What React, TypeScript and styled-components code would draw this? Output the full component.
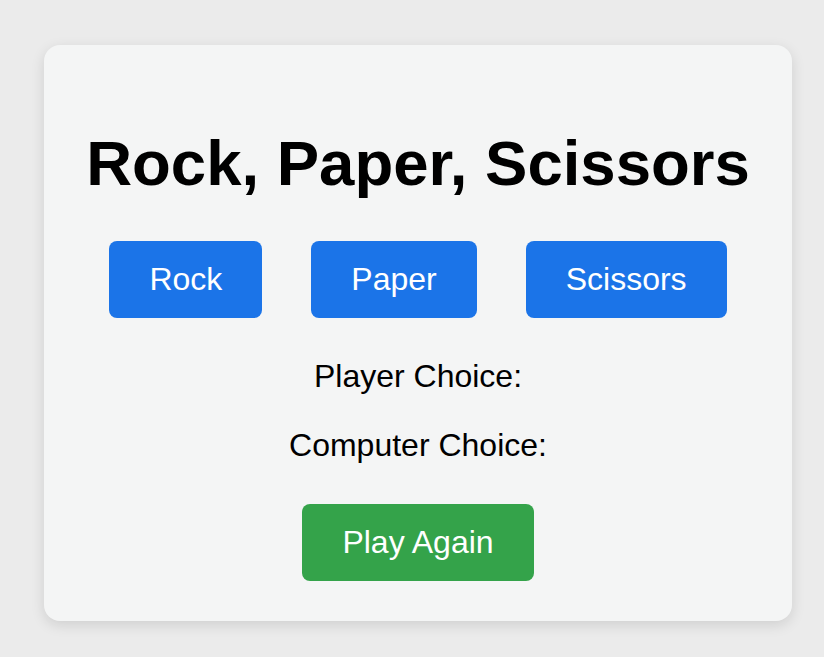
import React from "react";
import styled, { createGlobalStyle } from "styled-components";

const GlobalStyle = createGlobalStyle`
  html, body {
    margin: 0;
    padding: 0;
    background: #ebebeb;
    font-family: "Liberation Sans", Arial, Helvetica, sans-serif;
  }
`;

const Page = styled.div`
  display: flex;
  align-items: flex-start;
  padding: 45px 32px 37px 44px;
  min-height: 657px;
  box-sizing: border-box;
`;

const Card = styled.main`
  width: 748px;
  box-sizing: border-box;
  padding: 0 20px 40px;
  background: #f4f5f5;
  border-radius: 16px;
  box-shadow: 0 4px 14px rgba(0, 0, 0, 0.12);
  display: flex;
  flex-direction: column;
  align-items: center;
  color: #000;
`;

const Title = styled.h1`
  margin: 82px 0 40px;
  font-size: 63.5px;
  font-weight: 700;
  line-height: 73.6px;
  white-space: nowrap;
  text-align: center;
`;

const ChoiceRow = styled.div`
  display: flex;
  justify-content: center;
  gap: 49px;
  margin-bottom: 40px;
`;

const ActionButton = styled.button<{ $variant?: "blue" | "green" }>`
  font-family: "Liberation Sans", Arial, Helvetica, sans-serif;
  font-size: 32px;
  line-height: normal;
  padding: 20px 40px;
  border: none;
  border-radius: 8px;
  color: #fff;
  background: ${(p) => (p.$variant === "green" ? "#34a34a" : "#1b74e8")};
  cursor: pointer;
`;

const Result = styled.p`
  margin: 0;
  font-size: 32px;
  line-height: normal;
  text-align: center;
  & + & {
    margin-top: 32px;
  }
`;

const ResultGroup = styled.div`
  display: flex;
  flex-direction: column;
  align-items: center;
  margin-bottom: 40px;
`;

export default function App() {
  return (
    <>
      <GlobalStyle />
      <Page>
        <Card>
          <Title>Rock, Paper, Scissors</Title>
          <ChoiceRow>
            <ActionButton>Rock</ActionButton>
            <ActionButton>Paper</ActionButton>
            <ActionButton>Scissors</ActionButton>
          </ChoiceRow>
          <ResultGroup>
            <Result>Player Choice:</Result>
            <Result>Computer Choice:</Result>
          </ResultGroup>
          <ActionButton $variant="green">Play Again</ActionButton>
        </Card>
      </Page>
    </>
  );
}
